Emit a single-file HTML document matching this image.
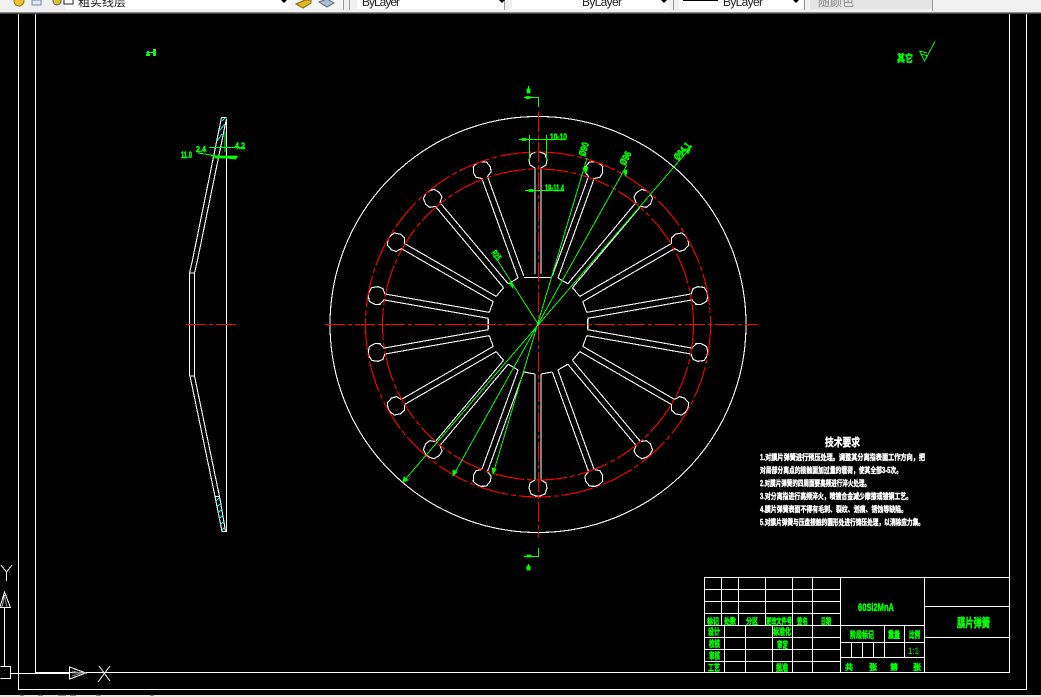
<!DOCTYPE html>
<html><head><meta charset="utf-8"><style>
html,body{margin:0;padding:0;background:#000;width:1041px;height:697px;overflow:hidden}
svg{display:block}
text{font-family:"Liberation Sans","Noto Sans CJK SC",sans-serif}
.g text{fill:#0f0;font-weight:700;stroke:#0f0;stroke-width:.5}
.w text{fill:#fff;font-weight:700;stroke:#fff;stroke-width:.4}
.tb{font-family:"Liberation Sans","Noto Sans CJK SC",sans-serif;font-size:12px;fill:#222}
</style></head><body>
<svg width="1041" height="697" viewBox="0 0 1041 697" xmlns="http://www.w3.org/2000/svg">
<defs>
<path id="s" d="M535 274V168L530 165 529 160 531 154 536 152H540L545 154 547 160 546 165 541 168V274"/>
<path id="c" d="M541 274L552.3 276"/>
</defs>
<rect width="1041" height="697" fill="#000"/>

<!-- top toolbar -->
<g shape-rendering="crispEdges">
<rect width="1041" height="13" fill="#f0f0f0"/>
<rect y="12" width="1041" height="1" fill="#8a8a8a"/>
<rect y="13" width="1041" height="1" fill="#444"/>
<rect x="65" width="226" height="9" fill="#fff"/>
<rect x="291" width="52" height="9" fill="#f5f5f5"/>
<rect x="343" width="1" height="10" fill="#999"/>
<rect x="349" width="1" height="10" fill="#999"/>
<rect x="357" width="147" height="9" fill="#fff"/>
<rect x="504" width="1" height="10" fill="#999"/>
<rect x="512" width="157" height="9" fill="#fff"/>
<rect x="673" width="1" height="10" fill="#999"/>
<rect x="679" width="124" height="9" fill="#fff"/>
<rect x="804" width="1" height="10" fill="#999"/>
<rect x="810" width="122" height="9" fill="#e4e4e4"/>
<rect x="932" width="1" height="11" fill="#999"/>
<rect x="683" y="0" width="35" height="1" fill="#000"/>
</g>
<circle cx="19" cy="1" r="5" fill="#f2c230" stroke="#8a7a30"/>
<rect x="32" y="0" width="9" height="5" fill="#dfe8f5" stroke="#7a8aa5"/>
<circle cx="57" cy="1" r="4" fill="#d6c22a" stroke="#666"/>
<rect x="64" y="-3" width="9" height="7" fill="#fff" stroke="#222"/>
<path d="M296 4L305 0H311V3L303 8Z" fill="#e6b820" stroke="#7a6510"/>
<path d="M319 2L327 -1 334 3 327 7Z" fill="#a8bdd8" stroke="#667"/>
<text x="78" y="6" class="tb">粗实线层</text>
<text x="362" y="6" class="tb" font-size="11" textLength="38">ByLayer</text>
<text x="582" y="6" class="tb" font-size="11" textLength="40">ByLayer</text>
<text x="723" y="6" class="tb" font-size="11" textLength="40">ByLayer</text>
<text x="818" y="6" class="tb" style="fill:#888">随颜色</text>
<path d="M281 0h6l-3 3zM499 0h6l-3 3zM661 0h6l-3 3zM793 0h6l-3 3z" fill="#000"/>

<!-- frames -->
<g fill="none" stroke="#fff" stroke-width="1" shape-rendering="crispEdges">
<path d="M18.5 14V689.5H1026.5V14"/>
<path d="M35.5 14V672.5H1009.5V14"/>
<!-- UCS -->
<path d="M0.5 666.5H10.5V678.5H0.5M4.5 607V666M0 607.5H10.5L4.5 592 0 607M2 607L4.5 595M10 673.5H69M69.5 667L86 673 69.5 679Z"/>
<path d="M1 565L6.5 572 12 565M6.5 572V581M99 666L110 681M110 666L98 682" stroke="#eee"/>
</g>
<path d="M72 673H86M72 671L82 673 72 676" stroke="#888" fill="none"/>
<path d="M2 607L4.5 596 7 607" stroke="#888" fill="none"/>

<!-- main disc -->
<g fill="none" stroke="#fff" stroke-width="1.1" shape-rendering="crispEdges">
<circle cx="538" cy="324.5" r="208"/>
<use href="#s"/>
<use href="#s" transform="rotate(20 538 324)"/><use href="#s" transform="rotate(40 538 324)"/>
<use href="#s" transform="rotate(60 538 324)"/><use href="#s" transform="rotate(80 538 324)"/>
<use href="#s" transform="rotate(100 538 324)"/><use href="#s" transform="rotate(120 538 324)"/>
<use href="#s" transform="rotate(140 538 324)"/><use href="#s" transform="rotate(160 538 324)"/>
<use href="#s" transform="rotate(180 538 324)"/><use href="#s" transform="rotate(200 538 324)"/>
<use href="#s" transform="rotate(220 538 324)"/><use href="#s" transform="rotate(240 538 324)"/>
<use href="#s" transform="rotate(260 538 324)"/><use href="#s" transform="rotate(280 538 324)"/>
<use href="#s" transform="rotate(300 538 324)"/><use href="#s" transform="rotate(320 538 324)"/>
<use href="#s" transform="rotate(340 538 324)"/>
<use href="#c" transform="rotate(20 538 324)"/><use href="#c" transform="rotate(40 538 324)"/>
<use href="#c" transform="rotate(60 538 324)"/><use href="#c" transform="rotate(80 538 324)"/>
<use href="#c" transform="rotate(100 538 324)"/><use href="#c" transform="rotate(120 538 324)"/>
<use href="#c" transform="rotate(140 538 324)"/><use href="#c" transform="rotate(160 538 324)"/>
<use href="#c" transform="rotate(180 538 324)"/><use href="#c" transform="rotate(200 538 324)"/>
<use href="#c" transform="rotate(220 538 324)"/><use href="#c" transform="rotate(240 538 324)"/>
<use href="#c" transform="rotate(260 538 324)"/><use href="#c" transform="rotate(280 538 324)"/>
<use href="#c" transform="rotate(300 538 324)"/><use href="#c" transform="rotate(320 538 324)"/>
<path d="M524 277.5H552"/>
<!-- side view -->
<path d="M226.5 118.5V531.5H222L215 496.5H219.5L225.5 531M215 496.5L190 376H194.5L219.5 496.5"/>
<path d="M221.5 117.5H226.5M221.5 117.5L192.5 260 189.5 273H194.5L197.5 260 226.5 118.5M189.5 273V376M194.5 273V376"/>
</g>
<g fill="none" stroke="#0ff" stroke-width="1" shape-rendering="crispEdges">
<path d="M216 501L219 498M217 507L221 503M218 513L222 509M219 519L223 515M220 525L224 521M222 530L225 527"/>
<path d="M222 121L225 118M219 131L225 124M217 141L222 134"/>
</g>

<!-- red centre lines -->
<g fill="none" stroke="#f00" stroke-width="1.1" shape-rendering="crispEdges">
<circle cx="538" cy="324.5" r="172.5" stroke-dasharray="32 3 5 3"/>
<circle cx="538" cy="324.5" r="155.5" stroke-dasharray="32 3 5 3"/>
<path d="M325 324.5H758" stroke-dasharray="20 3 4 3"/>
<path d="M538.5 112V537" stroke-dasharray="20 3 4 3"/>
<path d="M186 324.5H206M209 324.5H213M216 324.5H236"/>
</g>

<!-- green dimensions -->
<g fill="none" stroke="#0f0" stroke-width="1" shape-rendering="crispEdges">
<path d="M493 474L587 158M453 476L627 165M403 482L692 146M538 324L496 258"/>
<path d="M529.5 135V161M546.5 135V161M519 139.5H566M525 190.5H564"/>
<path d="M524 97.5H538.5V107M528.5 86V92"/>
<path d="M524 556.5H538.5V548M528.5 564V570"/>
<path d="M209 147.5H245M198 153L236 159M211 156L236 159M225 132V152"/>
<path d="M919.5 51L924.5 61 935 41.5M919.5 51L927 53M921 54L928 56"/>
</g>
<g fill="#0f0" stroke="#0f0" stroke-width=".8">
<path d="M583 168l5-1-2 6zM623 171l4-1-1 6zM687 150l3-1-2 5zM493 474l-1-6 4 1zM453 476l0-6 4 2zM403 482l1-5 4 3zM513 288l-4-5 3-1z"/>
<rect x="527" y="89" width="3" height="4"/><rect x="527" y="566" width="3" height="4"/>
<rect x="526" y="96.5" width="4" height="2"/><rect x="527" y="555" width="4" height="2"/>
<rect x="522" y="138.5" width="4" height="2"/><rect x="529" y="189.5" width="4" height="2"/>
<rect x="215" y="156" width="22" height="2"/>
</g>
<g fill="#0f0" shape-rendering="crispEdges">
<rect x="147" y="51" width="2" height="5"/><rect x="153" y="49" width="3" height="7"/><rect x="146" y="52" width="9" height="1"/><rect x="146" y="54" width="4" height="2"/>
</g>
<g class="g">
<text x="550" y="140" font-size="9" textLength="17" lengthAdjust="spacingAndGlyphs">10-10</text>
<text x="545" y="191" font-size="9" textLength="19" lengthAdjust="spacingAndGlyphs">18-11.4</text>
<text transform="translate(585 157) rotate(-73)" font-size="10" textLength="14" lengthAdjust="spacingAndGlyphs">Ø90</text>
<text transform="translate(625 166) rotate(-61)" font-size="10" textLength="14" lengthAdjust="spacingAndGlyphs">Ø96</text>
<text transform="translate(678 161) rotate(-49)" font-size="10" textLength="20" lengthAdjust="spacingAndGlyphs">Ø94.1</text>
<text transform="translate(491 253) rotate(53)" font-size="9" textLength="10" lengthAdjust="spacingAndGlyphs">R25</text>
<text x="181" y="158" font-size="9" textLength="11" lengthAdjust="spacingAndGlyphs">11.0</text>
<text x="196" y="152" font-size="8" textLength="10" lengthAdjust="spacingAndGlyphs">2.4</text>
<text x="235" y="149" font-size="9" textLength="10" lengthAdjust="spacingAndGlyphs">4.2</text>
<text x="897" y="62" font-size="10" textLength="16" lengthAdjust="spacingAndGlyphs">其它</text>
</g>

<!-- tech requirements -->
<g class="w">
<text x="825" y="446" font-size="11" textLength="35" lengthAdjust="spacingAndGlyphs">技术要求</text>
<text x="760" y="460" font-size="8" textLength="165" lengthAdjust="spacingAndGlyphs">1.对膜片弹簧进行预压处理。调整其分离指表面工作方向，把</text>
<text x="760" y="473" font-size="8" textLength="142" lengthAdjust="spacingAndGlyphs">对局部分离点的接触面加过量的载荷，使其全部3-5次。</text>
<text x="760" y="486" font-size="8" textLength="110" lengthAdjust="spacingAndGlyphs">2.对膜片弹簧的四周面要高频进行淬火处理。</text>
<text x="760" y="499" font-size="8" textLength="152" lengthAdjust="spacingAndGlyphs">3.对分离指进行高频淬火，喷镀合金减少摩擦或镀铜工艺。</text>
<text x="760" y="512" font-size="8" textLength="147" lengthAdjust="spacingAndGlyphs">4.膜片弹簧表面不得有毛刺、裂纹、划痕、锈蚀等缺陷。</text>
<text x="760" y="525" font-size="8" textLength="164" lengthAdjust="spacingAndGlyphs">5.对膜片弹簧与压盘接触的圆形处进行铸压处理，以消除应力集。</text>
</g>

<!-- title block -->
<g fill="none" stroke="#fff" stroke-width="1" shape-rendering="crispEdges">
<path d="M704.5 672V577.5H1009.5"/>
<path d="M704.5 589.5H840M704.5 601.5H840M704.5 613.5H840M704.5 625.5H924M704.5 637.5H840M704.5 649.5H840M704.5 661.5H840"/>
<path d="M721.5 577.5V625M738.5 577.5V625M765.5 577.5V625M792.5 577.5V672M812.5 577.5V672M840.5 577.5V672M924.5 577.5V672"/>
<path d="M724.5 625.5V672M745.5 625.5V672M772.5 625.5V672"/>
<path d="M840.5 642.5H924M840.5 657.5H924M884.5 625.5V657M904.5 625.5V657M851.5 642.5V657M862.5 642.5V657M873.5 642.5V657"/>
<path d="M924.5 606.5H1009M924.5 637.5H1009"/>
</g>
<g class="g">
<text x="858" y="611" font-size="11" textLength="36" lengthAdjust="spacingAndGlyphs">60Si2MnA</text>
<text x="957" y="627" font-size="12" textLength="33" lengthAdjust="spacingAndGlyphs">膜片弹簧</text>
<text x="707" y="624" font-size="8" textLength="12" lengthAdjust="spacingAndGlyphs">标记</text>
<text x="724" y="624" font-size="8" textLength="12" lengthAdjust="spacingAndGlyphs">处数</text>
<text x="746" y="624" font-size="8" textLength="12" lengthAdjust="spacingAndGlyphs">分区</text>
<text x="766" y="624" font-size="8" textLength="26" lengthAdjust="spacingAndGlyphs">更改文件号</text>
<text x="797" y="624" font-size="8" textLength="11" lengthAdjust="spacingAndGlyphs">签名</text>
<text x="821" y="624" font-size="8" textLength="10" lengthAdjust="spacingAndGlyphs">日期</text>
<text x="708" y="635" font-size="9" textLength="12" lengthAdjust="spacingAndGlyphs">设计</text>
<text x="709" y="647" font-size="9" textLength="11" lengthAdjust="spacingAndGlyphs">校核</text>
<text x="709" y="659" font-size="9" textLength="11" lengthAdjust="spacingAndGlyphs">审核</text>
<text x="708" y="671" font-size="9" textLength="12" lengthAdjust="spacingAndGlyphs">工艺</text>
<text x="773" y="635" font-size="9" textLength="18" lengthAdjust="spacingAndGlyphs">标准化</text>
<text x="777" y="648" font-size="9" textLength="11" lengthAdjust="spacingAndGlyphs">审定</text>
<text x="776" y="671" font-size="9" textLength="12" lengthAdjust="spacingAndGlyphs">批准</text>
<text x="850" y="638" font-size="9" textLength="24" lengthAdjust="spacingAndGlyphs">阶段标记</text>
<text x="888" y="638" font-size="9" textLength="12" lengthAdjust="spacingAndGlyphs">重量</text>
<text x="909" y="638" font-size="9" textLength="11" lengthAdjust="spacingAndGlyphs">比例</text>
<text x="845" y="670" font-size="8">共</text>
<text x="869" y="670" font-size="8">张</text>
<text x="890" y="670" font-size="8">第</text>
<text x="913" y="670" font-size="8">张</text>
</g>
<text x="908" y="654" font-size="9" fill="#0f0" textLength="11" lengthAdjust="spacingAndGlyphs">1:1</text>

<!-- bottom strip -->
<rect y="695" width="1041" height="2" fill="#e8e8e8"/>
<path d="M20 695h4M38 695h5M58 695h8M70 695h6M96 695h5M150 695h4" stroke="#333"/>
</svg>
</body></html>
